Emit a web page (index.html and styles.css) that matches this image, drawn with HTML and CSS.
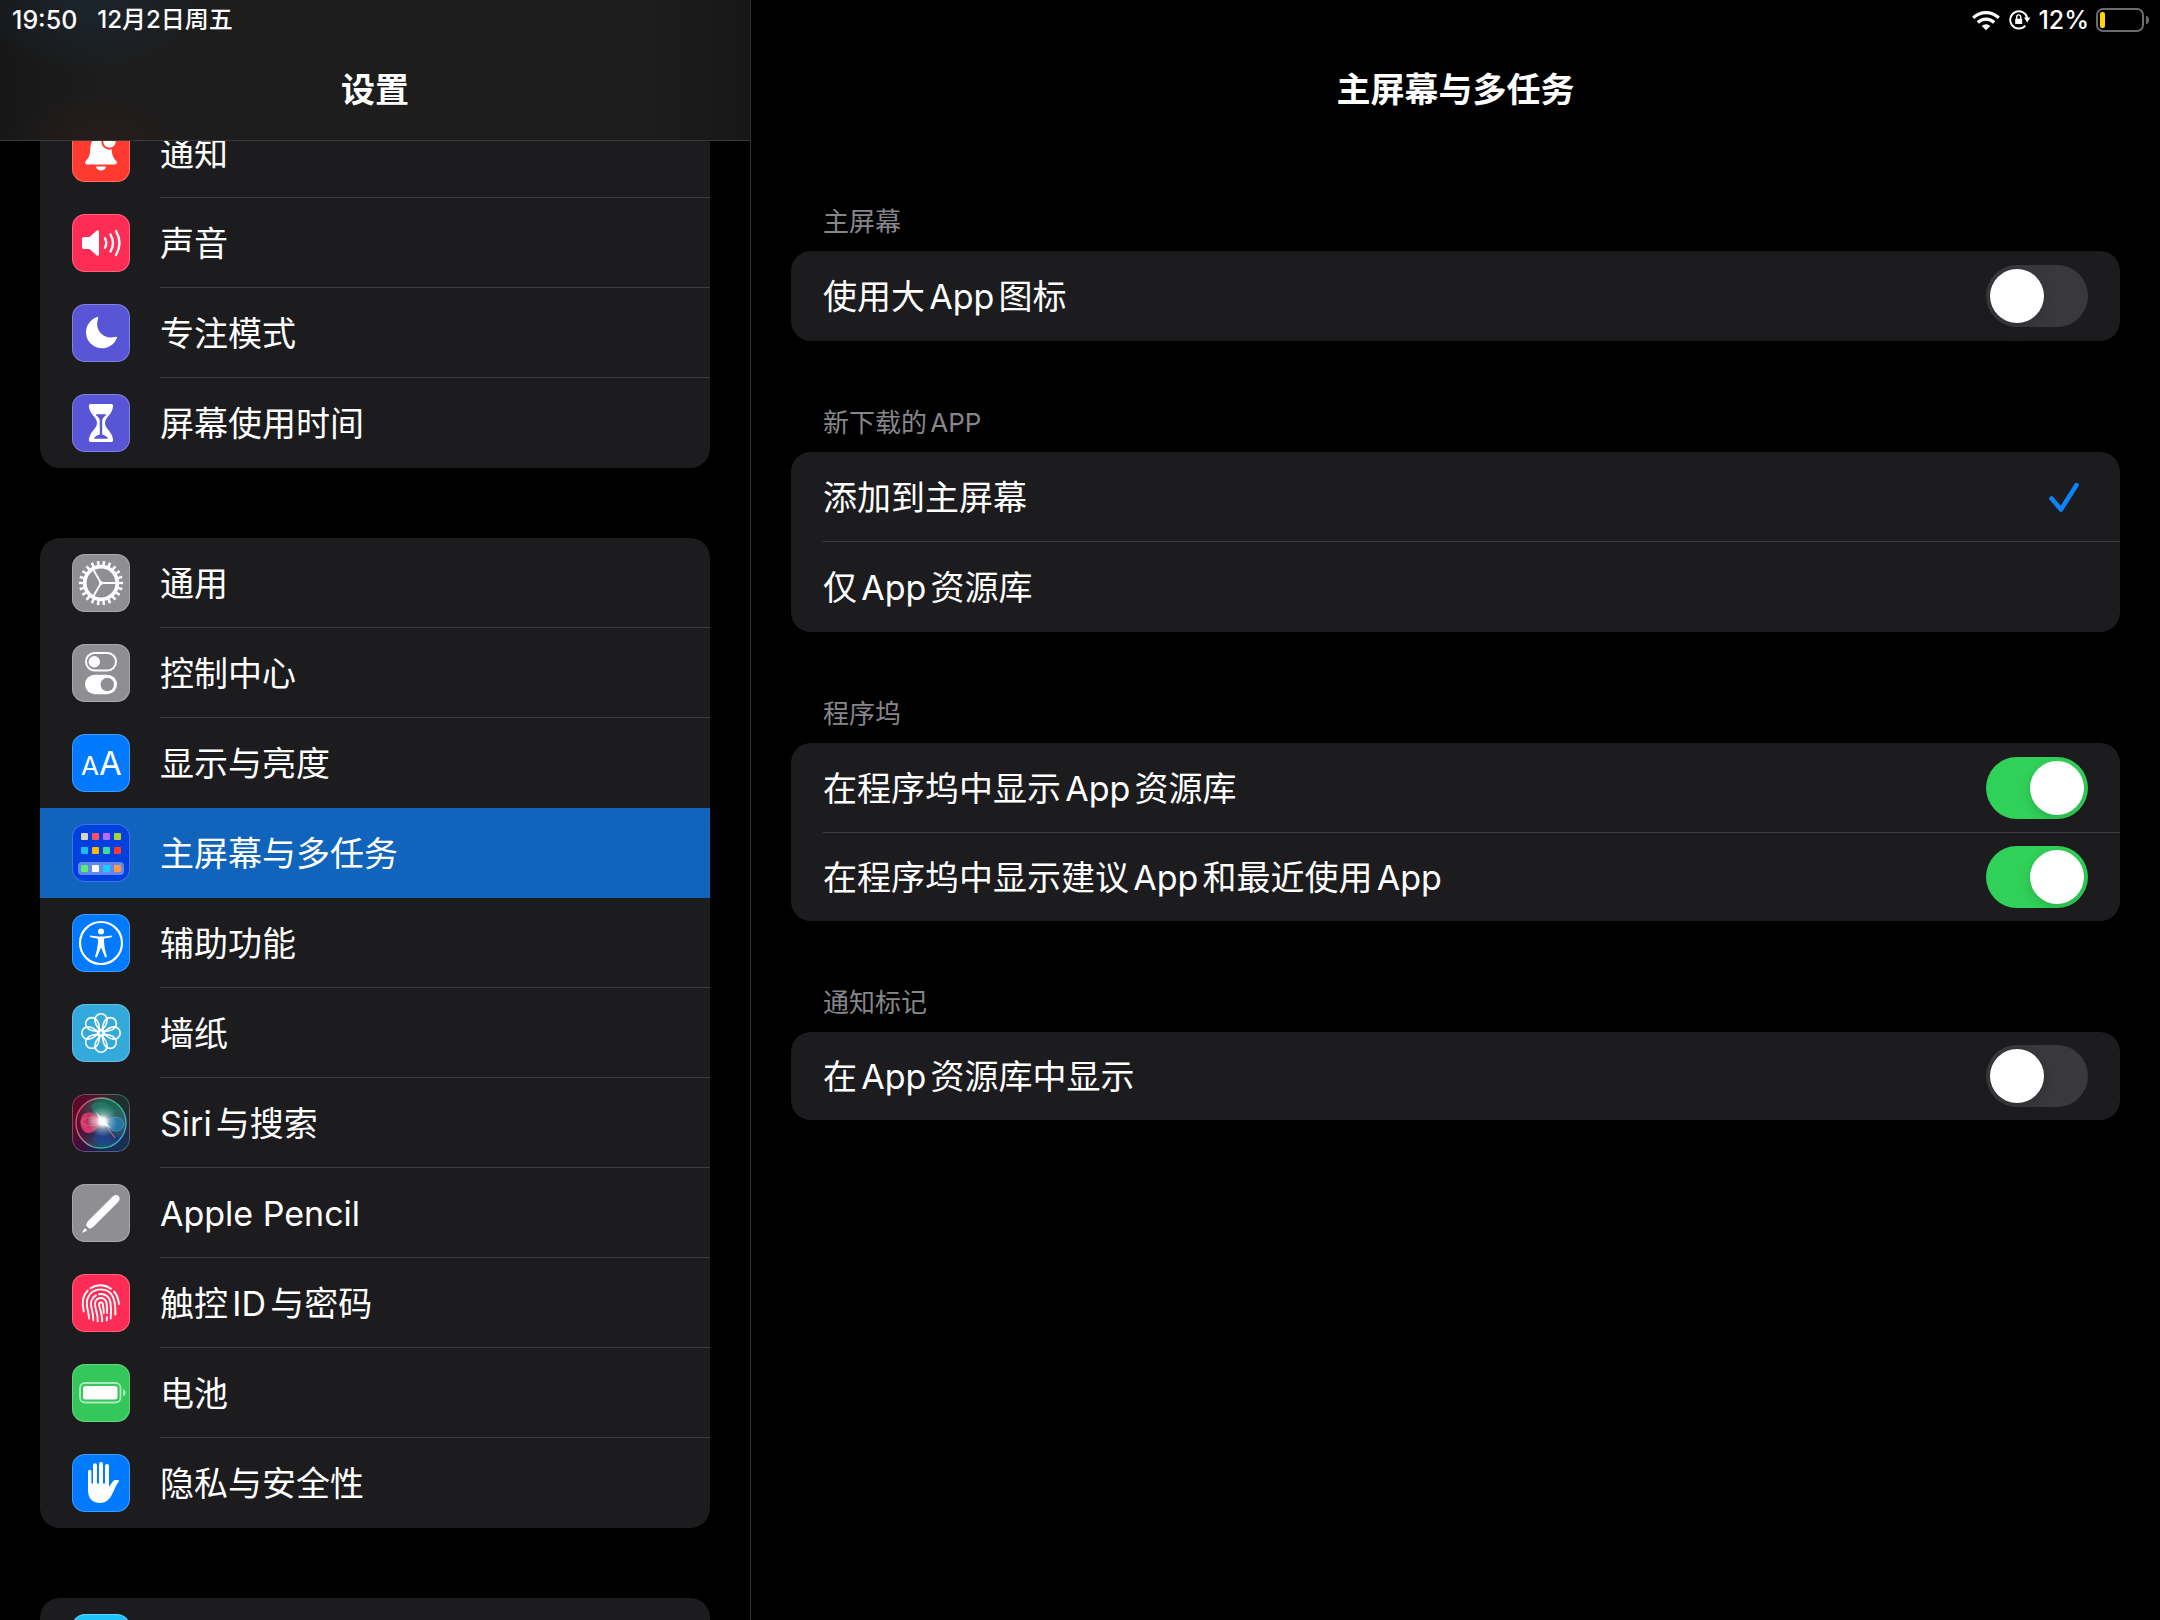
FILE: index.html
```
<!DOCTYPE html>
<html lang="zh-CN">
<head>
    <meta charset="UTF-8">
    <meta name="viewport" content="width=device-width, initial-scale=1.0">
    <title>设置</title>
    <link rel="stylesheet" href="styles.css">
</head>
<body>
    <aside class="sidebar">
        <header class="sidebar-header">
            <div class="status">
                <span>19:50</span>
                <span class="date">12月2日周五</span>
            </div>
            <h1 class="title">设置</h1>
        </header>
        <nav class="menu">
            <div class="card">
                <a class="row" href="#notifications">
                    <svg class="icon red" viewBox="0 0 58 58" aria-hidden="true">
                        <path fill="#fff" d="M15 40.500c-2 0-2.500-2-1.300-3.400C17 33.500 18 31 18.300 25 18.700 17 22 12 29 12s10.300 5 10.700 13c.3 6 1.300 8.500 4.600 12.100 1.200 1.400.7 3.400-1.300 3.400zM24 42.500h10c-.5 2.500-2.500 4-5 4s-4.500-1.500-5-4z"/>
                        <circle cx="37.500" cy="17.500" r="7.200" fill="#fff" stroke="#ff3b30" stroke-width="2"/>
                    </svg>
                    <span class="label">通知</span>
                </a>
                <a class="row" href="#sounds">
                    <svg class="icon pink" viewBox="0 0 58 58" aria-hidden="true">
                        <path fill="#fff" d="M12 23h5.500l7-6.300c1.200-1 2.500-.6 2.500 1v22.600c0 1.600-1.300 2-2.500 1l-7-6.300H12c-1.300 0-2-.7-2-2v-8c0-1.300.7-2 2-2z"/>
                        <path fill="none" stroke="#fff" stroke-width="2.400" stroke-linecap="round" d="M33 24.200q2.500 4.800 0 9.600M38.500 20.500q5 8.500 0 17M44 17q7 12 0 24"/>
                    </svg>
                    <span class="label">声音</span>
                </a>
                <a class="row" href="#focus">
                    <svg class="icon indigo" viewBox="0 0 58 58" aria-hidden="true">
                        <path fill="#fff" d="M25 13.100A16 16 0 1 0 44.900 34c.4-1-.2-1.500-1.200-1.200C34 36 21.500 28 26.200 13.900c.3-.8-.3-1.100-1.200-.8z"/>
                    </svg>
                    <span class="label">专注模式</span>
                </a>
                <a class="row" href="#screen-time">
                    <svg class="icon indigo" viewBox="0 0 58 58" aria-hidden="true">
                        <path fill="#fff" d="M19 10h20c1.500 0 2.200.8 2.100 2.200C40.500 20.500 33 23 33 29s7.500 8.500 8.100 16.800c.1 1.400-.6 2.200-2.100 2.200H19c-1.500 0-2.200-.8-2.100-2.200C17.500 37.500 25 35 25 29s-7.500-8.500-8.100-16.800C16.800 10.800 17.500 10 19 10z"/>
                        <path fill="#5856d6" d="M24.500 20.300h9c.6 0 .8.500.4.900-2 2-3.700 2.800-3.700 5.300v14c2 .8 4.200 1.500 5.600 3.300.3.500.1.900-.5.900H22.700c-.6 0-.8-.4-.5-.9 1.400-1.800 3.600-2.500 5.600-3.300v-14c0-2.500-1.700-3.300-3.700-5.300-.4-.4-.2-.9.4-.9z"/>
                    </svg>
                    <span class="label">屏幕使用时间</span>
                </a>
            </div>

            <div class="card">
                <a class="row" href="#general">
                    <svg class="icon gray" viewBox="0 0 58 58" aria-hidden="true">
                        <g fill="none" stroke="#fff">
                            <circle cx="29" cy="29" r="19.600" stroke-width="5" pathLength="44" stroke-dasharray="0.900 1.100" stroke-dashoffset="0.450"/>
                            <circle cx="29" cy="29" r="16.300" stroke-width="3.800"/>
                            <path stroke-width="1.900" d="M29 29h15M29 29l-7.500-13M29 29l-7.500 13"/>
                        </g>
                        <circle cx="29" cy="29" r="2" fill="#fff"/>
                    </svg>
                    <span class="label">通用</span>
                </a>
                <a class="row" href="#control-center">
                    <svg class="icon gray" viewBox="0 0 58 58" aria-hidden="true">
                        <rect x="14" y="9" width="30" height="17.500" rx="8.750" fill="none" stroke="#fff" stroke-width="2"/>
                        <circle cx="22.300" cy="17.700" r="5.700" fill="#fff"/>
                        <rect x="13" y="30.700" width="32" height="19.500" rx="9.750" fill="#fff"/>
                        <circle cx="35.300" cy="40.400" r="6.700" fill="#8e8e93"/>
                    </svg>
                    <span class="label">控制中心</span>
                </a>
                <a class="row" href="#display">
                    <svg class="icon blue" viewBox="0 0 58 58" aria-hidden="true">
                        <text class="glyph" x="9" y="41" font-size="26">A</text>
                        <text class="glyph" x="27" y="41" font-size="33">A</text>
                    </svg>
                    <span class="label">显示与亮度</span>
                </a>
                <a class="row selected" href="#home-screen" aria-current="page">
                    <svg class="icon deep-blue" viewBox="0 0 58 58" aria-hidden="true">
                        <rect x="6" y="38" width="46" height="13" rx="4" fill="#6688ec"/>
                        <rect x="9" y="9" width="7" height="7" rx="1" fill="#d5d5cd"/>
                        <rect x="20" y="9" width="7" height="7" rx="1" fill="#ff5062"/>
                        <rect x="31" y="9" width="7" height="7" rx="1" fill="#b86cff"/>
                        <rect x="42" y="9" width="7" height="7" rx="1" fill="#b0d22e"/>
                        <rect x="9" y="23" width="7" height="7" rx="1" fill="#1cbcfb"/>
                        <rect x="20" y="23" width="7" height="7" rx="1" fill="#fdbb00"/>
                        <rect x="31" y="23" width="7" height="7" rx="1" fill="#3dd9a0"/>
                        <rect x="42" y="23" width="7" height="7" rx="1" fill="#ff3a2e"/>
                        <rect x="9" y="41" width="7" height="7" rx="1" fill="#57ee74"/>
                        <rect x="20" y="41" width="7" height="7" rx="1" fill="#fff"/>
                        <rect x="31" y="41" width="7" height="7" rx="1" fill="#19cdff"/>
                        <rect x="42" y="41" width="7" height="7" rx="1" fill="#ff9a45"/>
                    </svg>
                    <span class="label">主屏幕与多任务</span>
                </a>
                <a class="row" href="#accessibility">
                    <svg class="icon blue" viewBox="0 0 58 58" aria-hidden="true">
                        <circle cx="29" cy="29" r="21" fill="none" stroke="#fff" stroke-width="2.200"/>
                        <circle cx="29" cy="17.600" r="3" fill="#fff"/>
                        <path fill="#fff" d="M19 21.400c3.500.8 6.500 1.100 10 1.100s6.500-.3 10-1.100c1.300-.2 1.600 1.600.4 1.900l-6.700 1.200c-.5.1-.7.4-.7 1 0 6.500 1.200 11.500 2.800 16.500.4 1.400-1.400 2-2 .7L29.500 34.500c-.2-.6-.8-.6-1 0l-3.300 8.200c-.6 1.300-2.400.7-2-.7 1.600-5 2.800-10 2.800-16.500 0-.6-.2-.9-.7-1l-6.700-1.200c-1.200-.3-.9-2.100.4-1.900z"/>
                    </svg>
                    <span class="label">辅助功能</span>
                </a>
                <a class="row" href="#wallpaper">
                    <svg class="icon sky" viewBox="0 0 58 58" aria-hidden="true">
                        <defs>
                            <path id="petal" d="M29 27C26 24 22.900 19.500 22.900 15.900a6.100 6.100 0 0 1 12.200 0C35.100 19.500 32 24 29 27z"/>
                        </defs>
                        <g fill="none" stroke="#fff" stroke-width="1.600">
                            <use href="#petal"/>
                            <use href="#petal" transform="rotate(45 29 29)"/>
                            <use href="#petal" transform="rotate(90 29 29)"/>
                            <use href="#petal" transform="rotate(135 29 29)"/>
                            <use href="#petal" transform="rotate(180 29 29)"/>
                            <use href="#petal" transform="rotate(225 29 29)"/>
                            <use href="#petal" transform="rotate(270 29 29)"/>
                            <use href="#petal" transform="rotate(315 29 29)"/>
                            <circle cx="29" cy="29" r="3.500"/>
                        </g>
                    </svg>
                    <span class="label">墙纸</span>
                </a>
                <a class="row" href="#siri">
                    <svg class="icon siri" viewBox="0 0 58 58" aria-hidden="true">
                        <defs>
                            <linearGradient id="siri-ring" x1="0" y1="0.300" x2="1" y2="0.700">
                                <stop offset="0" stop-color="#e0416c"/>
                                <stop offset="0.350" stop-color="#a08f8c"/>
                                <stop offset="0.650" stop-color="#2fb58a"/>
                                <stop offset="1" stop-color="#3aa4ee"/>
                            </linearGradient>
                            <linearGradient id="siri-orb" x1="0.600" y1="0" x2="0.400" y2="1">
                                <stop offset="0" stop-color="#17664f"/>
                                <stop offset="0.450" stop-color="#3d6166"/>
                                <stop offset="0.750" stop-color="#1f3a6a"/>
                                <stop offset="1" stop-color="#12607a"/>
                            </linearGradient>
                            <linearGradient id="siri-shade">
                                <stop offset="0" stop-color="#5c0a28"/>
                                <stop offset="0.500" stop-color="#5c0a28" stop-opacity="0"/>
                            </linearGradient>
                            <radialGradient id="siri-pink" cx="0.600" cy="0.400">
                                <stop offset="0" stop-color="#f07a9c"/>
                                <stop offset="0.600" stop-color="#b8365f"/>
                                <stop offset="1" stop-color="#e8396f"/>
                            </radialGradient>
                            <radialGradient id="siri-glow">
                                <stop offset="0" stop-color="#fff"/>
                                <stop offset="0.250" stop-color="#fff" stop-opacity="0.900"/>
                                <stop offset="0.500" stop-color="#e8f4f4" stop-opacity="0.400"/>
                                <stop offset="1" stop-color="#d0e8e8" stop-opacity="0"/>
                            </radialGradient>
                        </defs>
                        <circle cx="29" cy="29" r="25" fill="url(#siri-orb)"/>
                        <circle cx="29" cy="29" r="25" fill="url(#siri-shade)" stroke="url(#siri-ring)" stroke-width="1.400"/>
                        <path fill="#1f8f78" fill-opacity="0.500" d="M31 28C22 20 18 14 20 10q14-6 24 8-6 2-13 10z"/>
                        <path fill="url(#siri-pink)" fill-opacity="0.900" d="M31 28C26 19 17 16.500 12 20c-5 4-4.500 14 1 18 6 3.500 12-3 18-10z"/>
                        <path fill="none" stroke="#ff8aa8" stroke-opacity="0.500" stroke-width="0.800" d="M31 28C22 22 13 22 8.500 28c4 5 14 5 22.500 0"/>
                        <path fill="#2379b8" fill-opacity="0.800" stroke="#46b4dc" stroke-opacity="0.700" stroke-width="0.800" d="M31 28c6-3 13-7 18-3s2 11-4 12-9-5-14-9z"/>
                        <path fill="#2448a8" fill-opacity="0.450" d="M30 30 20 46q10 7 21 1z"/>
                        <path stroke="#e58ab0" stroke-opacity="0.650" stroke-width="1.200" d="m32 29 11 15"/>
                        <circle cx="30.500" cy="27.500" r="15" fill="url(#siri-glow)"/>
                        <path fill="#fff" fill-opacity="0.700" d="m24 18 7 7 8 9-10-4z"/>
                    </svg>
                    <span class="label">Siri与搜索</span>
                </a>
                <a class="row" href="#pencil">
                    <svg class="icon gray" viewBox="0 0 58 58" aria-hidden="true">
                        <path fill="#fff" d="M41 12.300c1.900-1.900 4.200-1.600 5.600-.2s1.700 3.700-.2 5.600L21.600 42.600c-.6.600-1.300 1-2.100 1.300l-2.200.8-3.300-3.300.8-2.200c.3-.8.700-1.500 1.300-2.100zM12.800 44l2.400 2.400-4.100 2.200c-.6.300-1-.1-.7-.7z"/>
                    </svg>
                    <span class="label">Apple Pencil</span>
                </a>
                <a class="row" href="#touch-id">
                    <svg class="icon pink" viewBox="0 0 58 58" aria-hidden="true">
                        <g fill="none" stroke="#fff" stroke-width="1.900" stroke-linecap="round">
                            <path d="M18.500 14.200a18 18 0 0 1 20.500.6M42 17.500c3.300 3.500 4.500 7.500 4.900 12.500M11.800 37.500C9.500 28 11 21 15.800 16.500"/>
                            <path d="M17 44.500C17 36 12.500 31 16 23.500 21 12.500 36.500 13 41 23c2.200 5 2.500 11 2.400 17.500"/>
                            <path d="M21.300 46.500c.2-8-2.200-11.500-2.300-16.500 0-4 2.300-7 5-8.600M27 20.200c6-1 10.500 2.300 11.500 8.300.7 5 .7 10.500.2 16"/>
                            <path d="M25.700 47.300c.5-7.300-2.700-12.300-2.700-17.300 0-7.500 10.500-8.300 11.600-.5.400 3.500.6 6.500.5 9.500M34.900 43.300l-.2 3.200"/>
                            <path d="M30 47.300c.8-6.800-2.500-12.300-2.900-16.500-.2-3 3.400-3.200 3.700-.5.300 3 1.100 5.700 1 8.700"/>
                        </g>
                    </svg>
                    <span class="label">触控ID与密码</span>
                </a>
                <a class="row" href="#battery">
                    <svg class="icon green" viewBox="0 0 58 58" aria-hidden="true">
                        <rect x="8" y="19" width="40.500" height="19.500" rx="5" fill="none" stroke="#fff" stroke-opacity="0.600" stroke-width="1.800"/>
                        <rect x="11" y="22" width="34.500" height="13.500" rx="2.500" fill="#fff"/>
                        <path fill="#fff" fill-opacity="0.600" d="M51 25c3.500 1.500 3.500 6 0 7.500z"/>
                    </svg>
                    <span class="label">电池</span>
                </a>
                <a class="row" href="#privacy">
                    <svg class="icon blue" viewBox="0 0 58 58" aria-hidden="true">
                        <path fill="none" stroke="#fff" stroke-width="4" stroke-linecap="round" d="M23 11.300V32M29 10v22M35 12v20"/>
                        <path fill="none" stroke="#fff" stroke-width="3.400" stroke-linecap="round" d="M17.700 17.500V34"/>
                        <path fill="#fff" d="M16 29.500h21v3.500c1.500-1.500 3.500-6.500 6-7 2-.3 4.500.2 4.300 1.300-3.500 3.200-4.800 9.200-8.300 15C36.500 46.500 33 49 28 49c-8 0-12-5-12-13z"/>
                    </svg>
                    <span class="label">隐私与安全性</span>
                </a>
            </div>

            <div class="card">
                <div class="row">
                    <svg class="icon cyan" viewBox="0 0 58 58" aria-hidden="true"></svg>
                </div>
            </div>
        </nav>
    </aside>

    <main class="detail">
        <header class="detail-header">
            <div class="status status-right">
                <svg class="wifi" viewBox="0 0 28 21" role="img" aria-label="Wi-Fi">
                    <g fill="none" stroke="#fff" stroke-width="3.200">
                        <path d="M1.200 7.800a18.200 18.200 0 0 1 25.600 0"/>
                        <path d="M5.800 12.500a11.700 11.700 0 0 1 16.400 0"/>
                    </g>
                    <path fill="#fff" d="M14 20.300l-4.300-4.200a6 6 0 0 1 8.600 0z"/>
                </svg>
                <svg class="lock" viewBox="0 0 22 20" role="img" aria-label="Lock">
                    <path fill="none" stroke="#fff" stroke-width="1.900" d="M18.200 8A8.600 8.600 0 1 0 16.300 15.600"/>
                    <path fill="#fff" d="M15 7.600h6.400l-3.200 4.800zM6.200 8.800h7v5.200h-7z"/>
                    <path fill="none" stroke="#fff" stroke-width="1.400" d="M7.700 9V6.900c0-2.700 4-2.700 4 0V9"/>
                </svg>
                <span>12%</span>
                <svg class="battery" viewBox="0 0 54 24" aria-hidden="true">
                    <rect x="1" y="1" width="46" height="22" rx="6" fill="none" stroke="#6c6c6e" stroke-width="2"/>
                    <rect x="4" y="4" width="5" height="16" rx="2" fill="#ffd60a"/>
                    <path fill="#6c6c6e" d="M50 7.500c4 1.500 4 7.500 0 9z"/>
                </svg>
            </div>
            <h2 class="title">主屏幕与多任务</h2>
        </header>

        <section class="group">
            <h3 class="group-title">主屏幕</h3>
            <div class="card">
                <label class="row">
                    <span class="label">使用大App图标</span>
                    <input class="switch" type="checkbox" role="switch">
                </label>
            </div>
        </section>

        <section class="group">
            <h3 class="group-title">新下载的APP</h3>
            <div class="card">
                <label class="row">
                    <span class="label">添加到主屏幕</span>
                    <input class="check" type="radio" name="new-apps" checked>
                </label>
                <label class="row">
                    <span class="label">仅App资源库</span>
                    <input class="check" type="radio" name="new-apps">
                </label>
            </div>
        </section>

        <section class="group">
            <h3 class="group-title">程序坞</h3>
            <div class="card">
                <label class="row">
                    <span class="label">在程序坞中显示App资源库</span>
                    <input class="switch" type="checkbox" role="switch" checked>
                </label>
                <label class="row compact">
                    <span class="label">在程序坞中显示建议App和最近使用App</span>
                    <input class="switch" type="checkbox" role="switch" checked>
                </label>
            </div>
        </section>

        <section class="group">
            <h3 class="group-title">通知标记</h3>
            <div class="card">
                <label class="row compact">
                    <span class="label">在App资源库中显示</span>
                    <input class="switch" type="checkbox" role="switch">
                </label>
            </div>
        </section>
    </main>
</body>
</html>
```
FILE: styles.css
```
* {
    box-sizing: border-box;
}
body {
    margin: 0;
    height: 100vh;
    display: flex;
    overflow: hidden;
    background-color: #000000;
    color: #ffffff;
    font-family: Inter, "Noto Sans CJK SC", sans-serif;
    font-size: 34px;
    line-height: 48px;
    text-autospace: normal;
}
h1, h2, h3 {
    margin: 0;
}

/* panes */
.sidebar {
    flex: 0 0 751px;
    border-right: 1px solid #2f2f32;
}
.detail {
    flex: 1;
    min-width: 0;
}

/* headers */
.sidebar-header, .detail-header {
    height: 141px;
}
.sidebar-header {
    position: relative;
    z-index: 1;
    border-bottom: 1px solid #3a3a3c;
    background:
        radial-gradient(ellipse 110px 60px at 90px 10px, #1b242d, transparent),
        radial-gradient(ellipse 90px 50px at 100px 140px, #261c1b, transparent),
        linear-gradient(90deg, #171717, #1d1d1d 15%, #1d1d1d 85%, #171717);
}
.status {
    height: 40px;
    padding: 0 12px;
    display: flex;
    align-items: center;
    gap: 20px;
    font-size: 25px;
    font-weight: 500;
    line-height: 40px;
}
.date {
    font-size: 24px;
    text-autospace: no-autospace;
}
.status-right {
    justify-content: flex-end;
    gap: 7px;
    padding-right: 10px;
}
.wifi {
    width: 28px;
    height: 21px;
    margin-right: 2px;
}
.lock {
    width: 22px;
    height: 20px;
}
.battery {
    width: 54px;
    height: 24px;
}
.title {
    padding-top: 26px;
    font-size: 34px;
    font-weight: 600;
    line-height: 48px;
    text-align: center;
}

/* grouped lists */
.menu {
    /* first rows are scrolled under the header */
    margin-top: -33px;
    padding: 0 40px;
    display: flex;
    flex-direction: column;
    gap: 70px;
}
.card {
    border-radius: 20px;
    background-color: #1c1c1e;
    overflow: hidden;
}
.row {
    position: relative;
    height: 90px;
    padding: 0 32px;
    display: flex;
    align-items: center;
    gap: 30px;
    color: inherit;
    text-decoration: none;
}
.compact {
    height: 88px;
}
.label {
    flex: 1;
    padding-top: 2px;
}
/* separator starts at the text, not at the card edge */
.row:not(:last-child)::after {
    content: "";
    position: absolute;
    left: 32px;
    right: 0;
    bottom: 0;
    height: 1px;
    background-color: #3d3d40;
}
.menu .row::after {
    left: 120px;
}
.selected {
    background-color: #1064bc;
}
.menu .selected::after, .row:has(+ .selected)::after {
    display: none;
}

/* icons */
.icon {
    width: 58px;
    height: 58px;
    border-radius: 13px;
    box-shadow: inset 0 0 0 1px rgba(255, 255, 255, 0.25);
}
.glyph {
    fill: #ffffff;
    font-family: Inter, sans-serif;
}
.red { background-color: #ff3b30; }
.pink { background-color: #ff2d55; }
.indigo { background-color: #5856d6; }
.gray { background-color: #8e8e93; }
.blue { background-color: #007aff; }
.deep-blue { background-color: #0040df; }
.sky { background-color: #34aadc; }
.green { background-color: #34c759; }
.cyan { background: linear-gradient(#1fc8fb, #1d70f2); }
.siri {
    background:
        radial-gradient(circle at 100% 0, #0c3b30, transparent 60%),
        radial-gradient(circle at 100% 100%, #0d3a5c, transparent 60%),
        radial-gradient(circle at 50% 100%, #1a1650, transparent 60%),
        #5c0a28;
}

/* detail pane */
.group {
    padding: 0 40px;
}
.group-title {
    padding: 62px 32px 9px;
    color: #86868b;
    font-size: 26px;
    font-weight: 400;
    line-height: 40px;
}
.detail-header + .group .group-title {
    padding-top: 61px;
}
.switch {
    appearance: none;
    width: 102px;
    height: 62px;
    margin: 0;
    padding: 4px;
    border-radius: 31px;
    background-color: #39393d;
}
.switch::before {
    content: "";
    display: block;
    width: 54px;
    height: 54px;
    border-radius: 50%;
    background-color: #ffffff;
    box-shadow: 0 4px 12px rgba(0, 0, 0, 0.15);
}
.switch:checked {
    background-color: #30d158;
}
.switch:checked::before {
    margin-left: auto;
}
.check {
    appearance: none;
    width: 32px;
    height: 32px;
    margin: 0 8px 0 0;
}
.check:checked {
    background-image: url("data:image/svg+xml,%3Csvg xmlns='http://www.w3.org/2000/svg' viewBox='0 0 32 32'%3E%3Cpath d='M3.500 17.500l9.500 11L28.500 4' fill='none' stroke='%230a84ff' stroke-width='4.500' stroke-linecap='round' stroke-linejoin='round'/%3E%3C/svg%3E");
}
```
